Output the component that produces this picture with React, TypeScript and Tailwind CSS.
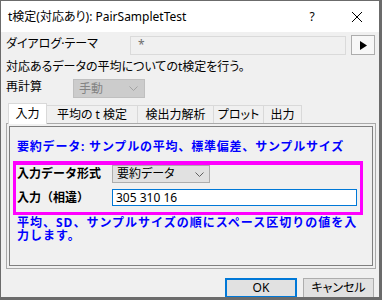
import React from 'react';

const ui = "font-['Noto_Sans','Noto_Sans_CJK_JP',sans-serif]";
const palt = "[font-feature-settings:'palt']";

function Chevron({ color }: { color: string }) {
  return (
    <svg width="9" height="5" viewBox="0 0 9 5" className="shrink-0">
      <polyline points="0.5,0.5 4.5,4.5 8.5,0.5" fill="none" stroke={color} strokeWidth="1" />
    </svg>
  );
}

const tabs = [
  { label: '入力', w: 'w-[39px]', active: true },
  { label: '平均の t 検定', w: 'w-[91px]', active: false },
  { label: '検出力解析', w: 'w-[76px]', active: false },
  { label: 'プロット', w: 'w-[50px]', active: false },
  { label: '出力', w: 'w-[38px]', active: false },
];

export default function App() {
  return (
    <div className={`w-[382px] h-[300px] bg-[#6b6b6b] pt-px pl-px overflow-hidden ${ui} ${palt} text-black`}>
      <div className="w-[378px] h-[296px] bg-[#f0f0f0] flex flex-col overflow-hidden">
        {/* title bar */}
        <div className="h-[31px] bg-white flex items-center pl-[7px] shrink-0">
          <span className="text-[12px] leading-none">t検定(対応あり): PairSampletTest</span>
          <span className="ml-auto text-[12px] leading-none w-[12px] text-center">?</span>
          <svg width="10" height="10" viewBox="0 0 10 10" className="ml-[34px] mr-[17px]">
            <line x1="0" y1="0" x2="10" y2="10" stroke="#000" strokeWidth="1" />
            <line x1="10" y1="0" x2="0" y2="10" stroke="#000" strokeWidth="1" />
          </svg>
        </div>

        <div className="pl-[5px] flex flex-col">
          {/* theme row */}
          <div className="mt-[3px] h-[20px] flex items-center">
            <span className="w-[124px] text-[12px] leading-none -mt-[3px]">ダイアログ·テーマ</span>
            <div className="w-[216px] h-[19px] border border-[#dadada] bg-[#f0f0f0] flex items-center pl-[7px] text-[12px] text-[#6d6d6d]">
              *
            </div>
            <button className="ml-[5px] w-[24px] h-[20px] border border-[#adadad] bg-[#f7f7f7] flex items-center justify-center">
              <svg width="7" height="9" viewBox="0 0 7 9">
                <polygon points="0,0 7,4.5 0,9" fill="#000" />
              </svg>
            </button>
          </div>

          {/* description */}
          <div className="h-[24px] flex items-center text-[12px] leading-none">
            対応あるデータの平均についてのt検定を行う。
          </div>

          {/* recalc */}
          <div className="h-[19px] flex items-center">
            <span className="w-[67px] text-[12px] leading-none -mt-[4px]">再計算</span>
            <div className="w-[72px] h-[19px] bg-[#cccccc] border border-[#bfbfbf] flex items-center pl-[5px] pr-[6px] text-[12px] text-[#838383]">
              <span className="flex-1">手動</span>
              <Chevron color="#a3a3a3" />
            </div>
          </div>

          {/* tabs */}
          <div className="mt-[5px] h-[21px] flex items-end pl-[2px] relative z-10 -mb-px">
            {tabs.map((t) =>
              t.active ? (
                <div
                  key={t.label}
                  className={`${t.w} h-[21px] bg-white border border-b-0 border-[#d9d9d9] flex items-center justify-center text-[12px] leading-none`}
                >
                  {t.label}
                </div>
              ) : (
                <div
                  key={t.label}
                  className={`${t.w} h-[18px] mb-px bg-[#f0f0f0] border border-l-0 border-b-0 border-[#d9d9d9] flex items-center justify-center text-[12px] leading-none`}
                >
                  {t.label}
                </div>
              )
            )}
          </div>

          {/* panel */}
          <div className="w-[370px] h-[146px] border border-[#a9a9a9] p-[2px]">
            <div className="h-full border border-[#7f7f7f] flex flex-col">
              <div className="mt-[10px] h-[20px] pl-[7px] flex items-center text-[12px] tracking-[0.8px] font-bold text-[#0000ff] leading-none [font-feature-settings:normal] whitespace-nowrap">
                要約データ: サンプルの平均、標準偏差、サンプルサイズ
              </div>

              <div className="mt-[4px] ml-[3px] w-[350px] h-[54px] border-[3px] border-t-[4px] border-[#ff00ff] flex flex-col [font-feature-settings:normal]">
                <div className="h-[18px] flex items-center">
                  <span className="w-[96px] pl-px text-[12px] font-bold leading-none">入力データ形式</span>
                  <div className="w-[98px] h-[18px] bg-[#e1e1e1] border border-[#adadad] flex items-center pl-[4px] pr-[5px] text-[12px] [font-feature-settings:'palt']">
                    <span className="flex-1">要約データ</span>
                    <Chevron color="#606060" />
                  </div>
                </div>
                <div className="mt-[6px] h-[17px] flex items-center">
                  <span className="w-[96px] pl-px text-[12px] font-bold leading-none whitespace-nowrap">入力（相違）</span>
                  <div className="w-[245px] h-[17px] bg-white border border-[#0078d7] flex items-center pl-[3px] text-[12px]">
                    305 310 16
                  </div>
                </div>
              </div>

              <div className="mt-px pl-[7px] text-[12px] tracking-[1px] leading-[13px] font-bold text-[#0000ff] [font-feature-settings:normal] whitespace-nowrap">
                平均、SD、サンプルサイズの順にスペース区切りの値を入
                <br />
                力します。
              </div>
            </div>
          </div>

          {/* buttons */}
          <div className="mt-[9px] flex justify-end pr-[5px] gap-[6px]">
            <button className="w-[72px] h-[20px] border-2 border-[#0078d7] bg-[#e1e1e1] text-[12px] leading-none">OK</button>
            <button className="w-[71px] h-[20px] border border-[#adadad] bg-[#e1e1e1] text-[12px] leading-none">キャンセル</button>
          </div>
        </div>
      </div>
    </div>
  );
}
